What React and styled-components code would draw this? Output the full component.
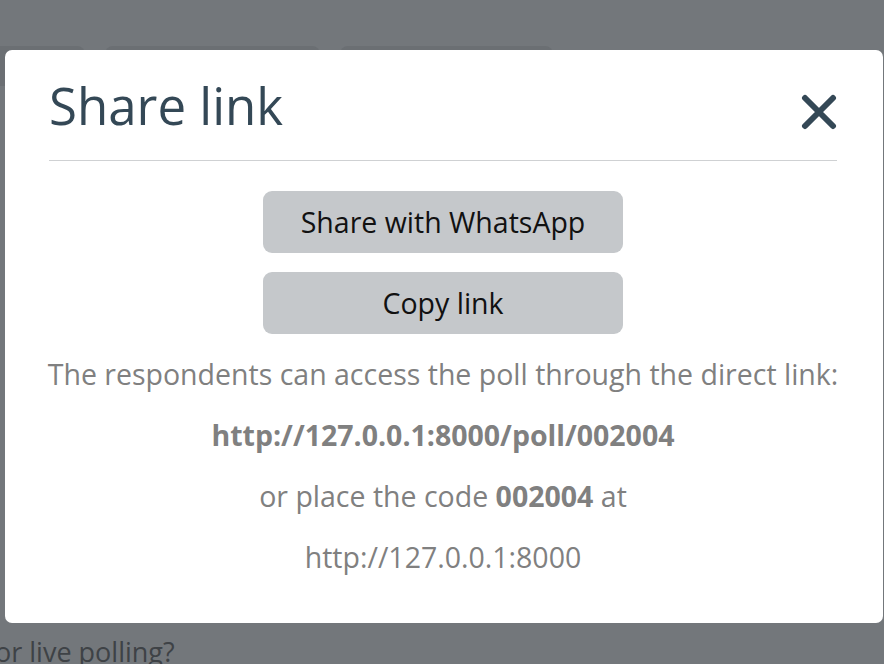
import styled, { createGlobalStyle } from "styled-components";

const GlobalStyle = createGlobalStyle`
  html, body {
    margin: 0;
    padding: 0;
    height: 100%;
    overflow: hidden;
    background: #73777b;
    font-family: "Open Sans", "Noto Sans", sans-serif;
  }
`;

const Page = styled.div`
  height: 664px;
  display: flex;
  flex-direction: column;
  padding-top: 46px;
  box-sizing: border-box;
`;

const Tabs = styled.div`
  display: flex;
  gap: 20px;
  margin-left: -20px;
`;

const Tab = styled.div`
  width: ${(p) => p.w}px;
  height: 40px;
  border-radius: 8px 8px 0 0;
  background: #6b6f73;
`;

const Question = styled.div`
  margin-top: auto;
  margin-left: -5px;
  font-size: 27px;
  color: #3e4246;
  line-height: 36px;
  margin-bottom: -6px;
`;

const Modal = styled.div`
  position: fixed;
  top: 50px;
  left: 5px;
  width: 878px;
  height: 573px;
  background: #fff;
  border-radius: 7px;
  box-sizing: border-box;
  padding: 0 46px 0 44px;
  display: flex;
  flex-direction: column;
`;

const Header = styled.div`
  display: flex;
  align-items: center;
  justify-content: space-between;
  height: 110px;
  border-bottom: 1px solid #cfd1d3;
`;

const Title = styled.h1`
  margin: 0;
  font-weight: 400;
  font-size: 51px;
  color: #344856;
`;

const CloseButton = styled.button`
  border: none;
  background: none;
  padding: 0;
  width: 36px;
  height: 36px;
  margin-top: 14px;
  cursor: pointer;
`;

const Body = styled.div`
  display: flex;
  flex-direction: column;
  align-items: center;
  padding-top: 30px;
`;

const ActionButton = styled.button`
  width: 360px;
  height: 62px;
  border: none;
  border-radius: 9px;
  background: #c5c8cb;
  color: #111;
  font-family: inherit;
  font-size: 28.5px;
  margin-bottom: 19px;
  cursor: pointer;
`;

const Info = styled.p`
  margin: 0;
  line-height: 39px;
  margin-top: ${(p) => (p.first ? "2px" : "22px")};
  font-size: 28.5px;
  color: #808080;
  text-align: center;
  white-space: nowrap;
  font-weight: ${(p) => (p.bold ? 700 : 400)};

  b {
    font-weight: 700;
  }
`;

const CloseIcon = () => (
  <svg width="36" height="36" viewBox="0 0 36 36">
    <path
      d="M4 4 L32 32 M32 4 L4 32"
      stroke="#344856"
      strokeWidth="6"
      strokeLinecap="round"
    />
  </svg>
);

export default function App() {
  return (
    <>
      <GlobalStyle />
      <Page>
        <Tabs>
          <Tab w={105} />
          <Tab w={215} />
          <Tab w={213} />
        </Tabs>
        <Question>or live polling?</Question>
      </Page>
      <Modal>
        <Header>
          <Title>Share link</Title>
          <CloseButton aria-label="Close">
            <CloseIcon />
          </CloseButton>
        </Header>
        <Body>
          <ActionButton>Share with WhatsApp</ActionButton>
          <ActionButton>Copy link</ActionButton>
          <Info first>
            The respondents can access the poll through the direct link:
          </Info>
          <Info bold>http://127.0.0.1:8000/poll/002004</Info>
          <Info>
            or place the code <b>002004</b> at
          </Info>
          <Info>http://127.0.0.1:8000</Info>
        </Body>
      </Modal>
    </>
  );
}
